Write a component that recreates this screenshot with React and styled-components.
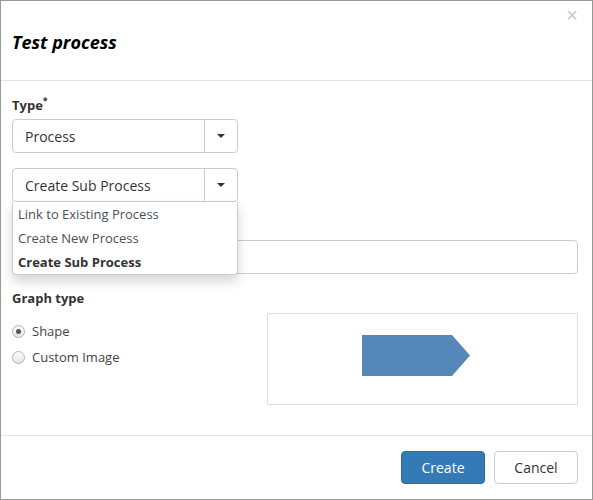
import styled, { createGlobalStyle } from "styled-components";

const Global = createGlobalStyle`
  html, body {
    margin: 0;
    background: #fff;
  }
  body {
    font-family: "Open Sans", "Liberation Sans", sans-serif;
    font-size: 13px;
    color: #333;
  }
  * {
    box-sizing: border-box;
  }
`;

const Modal = styled.div`
  width: 593px;
  height: 500px;
  border: 1px solid #999;
  display: flex;
  flex-direction: column;
  background: #fff;
`;

const Header = styled.header`
  position: relative;
  height: 80px;
  padding: 0 14px 0 11px;
  display: flex;
  align-items: center;
  border-bottom: 1px solid #e5e5e5;
`;

const Title = styled.h4`
  margin: 2px 0 0;
  font-size: 18px;
  font-weight: 700;
  font-style: italic;
  color: #000;
`;

const Close = styled.button`
  position: absolute;
  top: 4px;
  right: 14px;
  border: 0;
  background: none;
  padding: 0;
  font-family: "Liberation Sans", sans-serif;
  font-size: 20px;
  line-height: 20px;
  color: #c8c8c8;
  cursor: pointer;
`;

const Body = styled.div`
  flex: 1;
  padding: 15px 14px 0 11px;
`;

const Field = styled.div`
  position: relative;
  margin-bottom: 15px;
`;

const Label = styled.label`
  display: block;
  font-weight: 700;
  line-height: 18px;
  margin-bottom: ${({ $gap }) => $gap || 5}px;
  color: #333;
  visibility: ${({ $hidden }) => ($hidden ? "hidden" : "visible")};

  sup {
    font-size: 9px;
    vertical-align: 6px;
    line-height: 0;
  }
`;

const Select = styled.div`
  width: 226px;
  height: 34px;
  display: flex;
  border: 1px solid #ccc;
  border-radius: 4px;
  background: #fff;
`;

const SelectValue = styled.span`
  flex: 1;
  padding-left: 12px;
  display: flex;
  align-items: center;
  font-size: 14px;
  color: #333;
`;

const SelectButton = styled.span`
  width: 33px;
  border-left: 1px solid #ccc;
  display: flex;
  align-items: center;
  justify-content: center;

  &::after {
    content: "";
    border-left: 4px solid transparent;
    border-right: 4px solid transparent;
    border-top: 4px solid #333;
  }
`;

const Menu = styled.ul`
  position: absolute;
  top: 34px;
  left: 0;
  z-index: 5;
  width: 226px;
  margin: 0;
  padding: 0;
  list-style: none;
  background: #fff;
  border: 1px solid #ccc;
  border-top: 0;
  border-radius: 0 0 4px 4px;
  box-shadow: 0 6px 12px rgba(0, 0, 0, 0.175);
`;

const MenuItem = styled.li`
  height: 24px;
  line-height: 24px;
  padding-left: 5px;
  color: ${({ $active }) => ($active ? "#333" : "#4b4f5c")};
  font-weight: ${({ $active }) => ($active ? 700 : 400)};
`;

const Input = styled.input`
  display: block;
  width: 100%;
  height: 34px;
  border: 1px solid #ccc;
  border-radius: 4px;
  font: inherit;
`;

const GraphRow = styled.div`
  display: grid;
  grid-template-columns: 255px 1fr;
`;

const Radios = styled.div`
  padding-top: 9px;
  display: flex;
  flex-direction: column;
  gap: 8px;
`;

const RadioLabel = styled.label`
  display: flex;
  align-items: center;
  gap: 7px;
  line-height: 18px;
  color: #444;
`;

const RadioDot = styled.span`
  width: 13px;
  height: 13px;
  border-radius: 50%;
  border: 1px solid #b5b5b5;
  background: linear-gradient(#fdfdfd, #e4e4e4);
  display: flex;
  align-items: center;
  justify-content: center;

  &::after {
    content: "";
    width: 5px;
    height: 5px;
    border-radius: 50%;
    background: ${({ $checked }) => ($checked ? "#555" : "transparent")};
  }
`;

const Preview = styled.div`
  height: 92px;
  border: 1px solid #dcdfe4;
  padding: 0 14px 7px 0;
  display: flex;
  align-items: center;
  justify-content: center;
`;

const Footer = styled.footer`
  height: 64px;
  border-top: 1px solid #e5e5e5;
  padding: 15px 14px 0 11px;
  display: flex;
  justify-content: flex-end;
  gap: 9px;
`;

const Button = styled.button`
  width: 84px;
  height: 33px;
  border-radius: 4px;
  font-family: inherit;
  font-size: 14px;
  border: 1px solid ${({ $primary }) => ($primary ? "#2e6da4" : "#ccc")};
  background: ${({ $primary }) => ($primary ? "#337ab7" : "#fff")};
  color: ${({ $primary }) => ($primary ? "#fff" : "#333")};
`;

export default function App() {
  return (
    <>
      <Global />
      <Modal>
        <Header>
          <Title>Test process</Title>
          <Close aria-label="Close">×</Close>
        </Header>
        <Body>
          <Field>
            <Label>
              Type<sup>*</sup>
            </Label>
            <Select>
              <SelectValue>Process</SelectValue>
              <SelectButton />
            </Select>
          </Field>
          <Field>
            <Select>
              <SelectValue>Create Sub Process</SelectValue>
              <SelectButton />
            </Select>
            <Menu>
              <MenuItem>Link to Existing Process</MenuItem>
              <MenuItem>Create New Process</MenuItem>
              <MenuItem $active>Create Sub Process</MenuItem>
            </Menu>
          </Field>
          <Field>
            <Label $hidden>Name</Label>
            <Input />
          </Field>
          <Label $gap={6}>Graph type</Label>
          <GraphRow>
            <Radios>
              <RadioLabel>
                <RadioDot $checked />
                Shape
              </RadioLabel>
              <RadioLabel>
                <RadioDot />
                Custom Image
              </RadioLabel>
            </Radios>
            <Preview>
              <svg width="108" height="41" viewBox="0 0 108 41">
                <polygon points="0,0 90,0 108,20.5 90,41 0,41" fill="#5587b9" />
              </svg>
            </Preview>
          </GraphRow>
        </Body>
        <Footer>
          <Button $primary>Create</Button>
          <Button>Cancel</Button>
        </Footer>
      </Modal>
    </>
  );
}
